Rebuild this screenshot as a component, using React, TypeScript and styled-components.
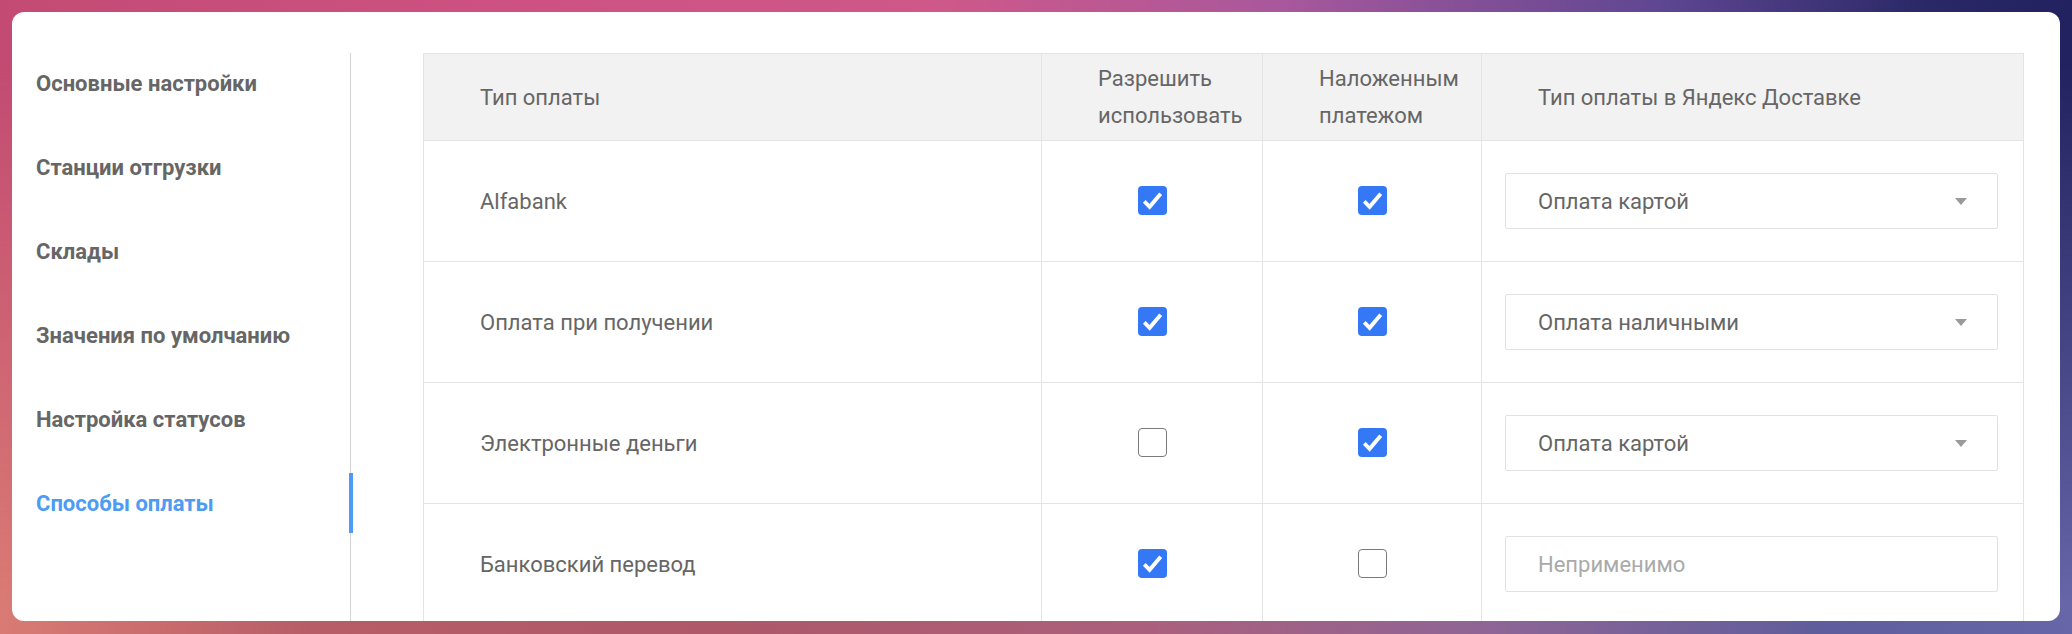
import styled, { createGlobalStyle, css } from 'styled-components'

const GlobalStyle = createGlobalStyle`
  html, body {
    margin: 0;
    padding: 0;
    height: 100%;
  }
  body {
    font-family: Roboto, "Liberation Sans", sans-serif;
    overflow: hidden;
  }
  * {
    box-sizing: border-box;
  }
`

const Page = styled.div`
  position: relative;
  height: 100vh;
  padding: 12px 12px 13px 12px;
  display: flex;
  background: linear-gradient(90deg, #c34b73 0%, #cd5282 25%, #cf5889 45%, #a8589c 62%, #5f4792 80%, #2a2867 93%, #222260 100%);

  &::before {
    content: '';
    position: absolute;
    inset: 0;
    background: linear-gradient(90deg, #d97b74 0%, #b75d67 15%, #ae5869 35%, #ab5f7c 55%, #8e6596 72%, #5f5d9c 88%, #6666a8 100%);
    -webkit-mask-image: linear-gradient(to bottom, transparent 10%, black 95%);
    mask-image: linear-gradient(to bottom, transparent 10%, black 95%);
  }
`

const Card = styled.div`
  position: relative;
  flex: 1;
  display: flex;
  background: #ffffff;
  border-radius: 12px;
  overflow: hidden;
`

const Sidebar = styled.nav`
  width: 339px;
  flex-shrink: 0;
  margin-top: 41px;
  border-right: 1px solid #d4d4d4;
  display: flex;
  flex-direction: column;
  gap: 24px;
`

const NavItem = styled.div<{ $active?: boolean }>`
  position: relative;
  height: 60px;
  display: flex;
  align-items: center;
  padding-left: 24px;
  font-size: 22px;
  font-weight: 700;
  color: ${(p) => (p.$active ? '#4d9bf2' : '#666666')};
  cursor: pointer;

  ${(p) =>
    p.$active &&
    css`
      &::after {
        content: '';
        position: absolute;
        top: 0;
        right: -3px;
        width: 4px;
        height: 100%;
        background: #4d9bf2;
      }
    `}
`

const Main = styled.main`
  flex: 1;
  padding: 41px 37px 0 72px;
`

const Table = styled.table`
  width: 1600px;
  border-collapse: collapse;
  table-layout: fixed;
  font-size: 22px;
  color: #666666;
  border: 1px solid #e4e4e4;
`

const HeadCell = styled.th<{ $width: number }>`
  width: ${(p) => p.$width}px;
  height: 87px;
  padding: 0 0 0 56px;
  background: #f2f2f2;
  border: 1px solid #e4e4e4;
  text-align: left;
  font-weight: 400;
  line-height: 37px;
  vertical-align: middle;
`

const Cell = styled.td<{ $center?: boolean }>`
  height: 121px;
  padding: ${(p) => (p.$center ? '0' : '0 0 0 56px')};
  border: 1px solid #e4e4e4;
  text-align: ${(p) => (p.$center ? 'center' : 'left')};
  vertical-align: middle;
`

const SelectCell = styled.td`
  height: 121px;
  padding: 0 25px 0 23px;
  border: 1px solid #e4e4e4;
  vertical-align: middle;
`

const Box = styled.span<{ $checked: boolean }>`
  display: inline-flex;
  align-items: center;
  justify-content: center;
  width: 29px;
  height: 29px;
  margin-top: -3px;
  border-radius: 4px;
  vertical-align: middle;
  background: ${(p) => (p.$checked ? '#3478f6' : '#ffffff')};
  border: ${(p) => (p.$checked ? 'none' : '1.5px solid #7a7a7a')};
`

const Select = styled.div<{ $disabled?: boolean }>`
  height: 56px;
  display: flex;
  align-items: center;
  justify-content: space-between;
  padding: 0 30px 0 32px;
  border: 1px solid #e2e2e2;
  border-radius: 2px;
  background: #ffffff;
  color: ${(p) => (p.$disabled ? '#aaaaaa' : '#666666')};
`

const Caret = styled.span`
  width: 0;
  height: 0;
  border-left: 6px solid transparent;
  border-right: 6px solid transparent;
  border-top: 7px solid #9a9a9a;
`

function Checkbox({ checked }: { checked: boolean }) {
  return (
    <Box $checked={checked}>
      {checked && (
        <svg width="29" height="29" viewBox="0 0 30 30">
          <path d="M6.5 16 L12 21.5 L23.5 8" fill="none" stroke="#ffffff" strokeWidth="4" strokeLinejoin="miter" />
        </svg>
      )}
    </Box>
  )
}

const navItems = [
  'Основные настройки',
  'Станции отгрузки',
  'Склады',
  'Значения по умолчанию',
  'Настройка статусов',
  'Способы оплаты',
]

const payments = [
  { name: 'Alfabank', allow: true, cod: true, type: 'Оплата картой' },
  { name: 'Оплата при получении', allow: true, cod: true, type: 'Оплата наличными' },
  { name: 'Электронные деньги', allow: false, cod: true, type: 'Оплата картой' },
  { name: 'Банковский перевод', allow: true, cod: false, type: null },
]

export default function App() {
  return (
    <>
      <GlobalStyle />
      <Page>
        <Card>
          <Sidebar>
            {navItems.map((item, i) => (
              <NavItem key={item} $active={i === navItems.length - 1}>
                {item}
              </NavItem>
            ))}
          </Sidebar>
          <Main>
            <Table>
              <thead>
                <tr>
                  <HeadCell $width={618}>Тип оплаты</HeadCell>
                  <HeadCell $width={221}>
                    Разрешить
                    <br />
                    использовать
                  </HeadCell>
                  <HeadCell $width={219}>
                    Наложенным
                    <br />
                    платежом
                  </HeadCell>
                  <HeadCell $width={542}>Тип оплаты в Яндекс Доставке</HeadCell>
                </tr>
              </thead>
              <tbody>
                {payments.map((p) => (
                  <tr key={p.name}>
                    <Cell>{p.name}</Cell>
                    <Cell $center>
                      <Checkbox checked={p.allow} />
                    </Cell>
                    <Cell $center>
                      <Checkbox checked={p.cod} />
                    </Cell>
                    <SelectCell>
                      {p.type ? (
                        <Select>
                          {p.type}
                          <Caret />
                        </Select>
                      ) : (
                        <Select $disabled>Неприменимо</Select>
                      )}
                    </SelectCell>
                  </tr>
                ))}
              </tbody>
            </Table>
          </Main>
        </Card>
      </Page>
    </>
  )
}
